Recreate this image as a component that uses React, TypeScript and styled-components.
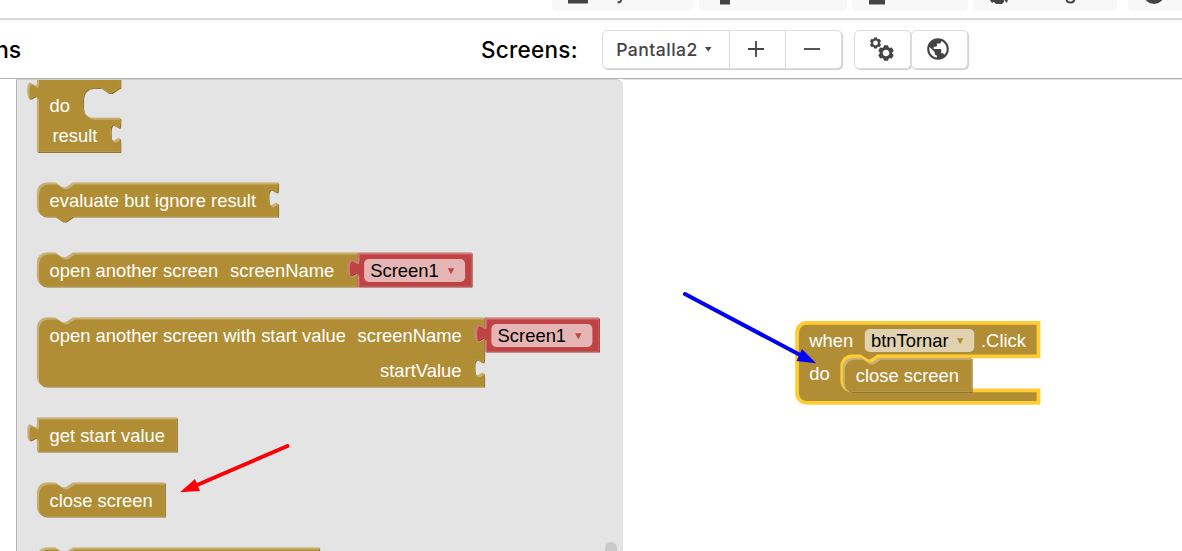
import React, { useId } from 'react';
import styled, { createGlobalStyle } from 'styled-components';
import { MdPublic } from 'react-icons/md';

const Global = createGlobalStyle`
  * { box-sizing: border-box; }
  body { margin: 0; background: #fff; overflow: hidden; }
`;

const Page = styled.div`
  width: 1182px;
  height: 551px;
  overflow: hidden;
  display: flex;
  flex-direction: column;
  font-family: Inter, 'Open Sans', sans-serif;
`;

const MenuStrip = styled.header`
  height: 20px;
  flex: none;
  padding-left: 552px;
  display: flex;
  align-items: flex-start;
  gap: 5px;
  border-bottom: 2px solid #dadada;
  overflow: hidden;
`;

const MenuTab = styled.div<{ $width: number; $shift?: number }>`
  flex: none;
  width: ${(p) => p.$width}px;
  margin-left: ${(p) => p.$shift ?? 0}px;
  height: 11px;
  background: #f8f8f8;
  border-radius: 0 0 5px 5px;
  overflow: hidden;
  svg { display: block; }
`;

const Toolbar = styled.div`
  height: 59px;
  flex: none;
  display: flex;
  align-items: center;
  border-bottom: 1px solid #b4b4b6;
  background: linear-gradient(#f7f7f7, #fff 4px);
`;

const Title = styled.div`
  width: 481px;
  flex: none;
  padding-top: 1px;
  font-size: 23px;
  font-weight: 500;
  display: flex;
  overflow: hidden;
`;

const TitleTail = styled.span`
  margin-left: -5px;
`;

const ScreensLabel = styled.div`
  width: 121px;
  flex: none;
  padding-top: 1px;
  font-size: 22.5px;
  font-weight: 500;
  letter-spacing: 0.25px;
`;

const ButtonGroup = styled.div<{ $gap: number }>`
  height: 39px;
  margin-right: ${(p) => p.$gap}px;
  display: flex;
  border: 1px solid #dcdcdc;
  border-radius: 5px;
  box-shadow: 1px 1px 1px #cfcfcf;
  background: #fff;
`;

const ToolButton = styled.button<{ $width: number }>`
  width: ${(p) => p.$width}px;
  padding: 0 4px 0 0;
  border: 0;
  border-left: 1px solid #d8d8d8;
  background: none;
  color: #444;
  display: flex;
  align-items: center;
  justify-content: center;
  gap: 7px;
  font: 500 17.6px Inter, sans-serif;
  letter-spacing: 0.45px;
  &:first-child { border-left: 0; }
`;

const Workspace = styled.main`
  flex: 1;
  min-height: 0;
  padding-left: 16px;
  display: flex;
`;

const Flyout = styled.aside`
  position: relative;
  width: 607px;
  flex: none;
  border-left: 1px solid #b2b6bb;
  border-top: 1px solid #cfcfd1;
  border-radius: 0 7px 0 0;
  background: #e4e4e4;
  overflow: hidden;
`;

const BlockList = styled.div`
  display: flex;
  flex-direction: column;
  padding-left: 20px;
  margin-top: -5px;
`;

const BlockSlot = styled.div<{ $height: number }>`
  height: ${(p) => p.$height}px;
  flex: none;
`;

const ScrollThumb = styled.div`
  position: absolute;
  left: 588px;
  top: 462px;
  width: 12px;
  height: 40px;
  border-radius: 6px;
  background: #c9c9c9;
`;

const Canvas = styled.section`
  position: relative;
  flex: 1;
  border-top: 1px solid #e2e2e3;
`;

const Placed = styled.div<{ $x: number; $y: number }>`
  position: absolute;
  left: ${(p) => p.$x}px;
  top: ${(p) => p.$y}px;
`;

const Drawing = styled.svg`
  display: block;
  width: 1px;
  height: 1px;
  overflow: visible;
`;

const Label = styled.text<{ $dark?: boolean }>`
  font-family: 'Liberation Sans', Arial, sans-serif;
  font-size: 18.4px;
  fill: ${(p) => (p.$dark ? '#000' : '#fff')};
`;

const Arrows = styled.svg`
  position: absolute;
  left: 0;
  top: 0;
  pointer-events: none;
`;

const GOLD = { main: '#b18e35', light: '#c8b072', dark: '#8e722a', field: '#e0d2ae' };
const RED = { main: '#bf4343', light: '#d27b7b', dark: '#993636', field: '#e5b4b4' };
type Palette = typeof GOLD;

const NOTCH = 'h8.4 l7.2,4.8 h3.6 l7.2,-4.8';
const NOTCH_BACK = 'l-7.2,4.8 h-3.6 l-7.2,-4.8';
const SOCKET = 'c0,12 -9.6,-9.6 -9.6,9 s9.6,-3 9.6,9';
const PLUG = 'V24 c0,-12 -9.6,9.6 -9.6,-9 s9.6,3 9.6,-9 Z';

const command = (w: number, h: number, sockets: number[] = [], tail = false) =>
  `M0,9.6 a9.6,9.6 0 0 1 9.6,-9.6 ${NOTCH} H${w} ` +
  sockets.map((y) => `V${y} ${SOCKET}`).join(' ') +
  ` V${h} ${tail ? `H36 ${NOTCH_BACK} ` : ''}H9.6 a9.6,9.6 0 0 1 -9.6,-9.6 Z`;

const value = (w: number, h: number) => `M0,0 H${w} V${h} H0 ${PLUG}`;

function Shape({ d, tone = GOLD, x = 0, y = 0 }: { d: string; tone?: Palette; x?: number; y?: number }) {
  const id = useId();
  return (
    <g transform={`translate(${x} ${y})`}>
      <clipPath id={id}><path d={d} /></clipPath>
      <path d={d} transform="translate(1.1 1.1)" fill={tone.dark} />
      <path d={d} fill={tone.light} />
      <g clipPath={`url(#${id})`}>
        <path d={d} transform="translate(2 2)" fill={tone.main} />
      </g>
      <path d={d} fill="none" stroke={tone.light} strokeWidth="0.4" strokeOpacity="0.5" />
    </g>
  );
}

function Field({ x, y, w, text, tone }: { x: number; y: number; w: number; text: string; tone: Palette }) {
  return (
    <g transform={`translate(${x} ${y})`}>
      <rect width={w} height="23" rx="4.8" fill={tone.field} />
      <Label $dark x="6.2" y="18">{text}</Label>
      <path d={`M${w - 17.3},9.2 h6.4 l-3.2,6 Z`} fill={tone.main} />
    </g>
  );
}

function ScreenName({ x }: { x: number }) {
  return (
    <g transform={`translate(${x} 0.5)`}>
      <Shape tone={RED} d={value(114, 34)} />
      <Field x={6.6} y={6.5} w={101} text="Screen1" tone={RED} />
    </g>
  );
}

const doResult =
  `M0,0 H83.2 V12.2 H82 ${NOTCH_BACK} H55.6 a9.6,9.6 0 0 0 -9.6,9.6 V32.4 ` +
  `a9.6,9.6 0 0 0 9.6,9.6 H83.2 V48 ${SOCKET} V76 H0 ${PLUG}`;

const whenDo =
  `M0,9.6 a9.6,9.6 0 0 1 9.6,-9.6 H241.4 V33.5 H81 ${NOTCH_BACK} H54.8 ` +
  `a9.6,9.6 0 0 0 -9.6,9.6 V58 a9.6,9.6 0 0 0 9.6,9.6 H241.4 V80 H9.6 a9.6,9.6 0 0 1 -9.6,-9.6 Z`;

function Gear({ cx, cy, r }: { cx: number; cy: number; r: number }) {
  return (
    <g transform={`translate(${cx} ${cy})`}>
      <circle r={r * 0.6} fill="none" stroke="#444" strokeWidth={r * 0.34} />
      {[0, 60, 120, 180, 240, 300].map((a) => (
        <path
          key={a}
          transform={`rotate(${a})`}
          d={`M${-r * 0.4},${-r * 0.62} L${-r * 0.24},${-r} H${r * 0.24} L${r * 0.4},${-r * 0.62} Z`}
          fill="#444"
        />
      ))}
    </g>
  );
}

export default function App() {
  return (
    <Page>
      <Global />
      <MenuStrip>
        <MenuTab $width={142}>
          <svg width="142" height="11">
            <rect x="16" y="-3" width="20" height="6.5" fill="#444" />
            <path d="M69,-4 V0 Q69,2.6 65.5,2.3" fill="none" stroke="#444" strokeWidth="2" />
          </svg>
        </MenuTab>
        <MenuTab $width={148}>
          <svg width="148" height="11"><rect x="21" y="-2" width="10" height="6.5" fill="#444" /></svg>
        </MenuTab>
        <MenuTab $width={116}>
          <svg width="116" height="11"><rect x="17" y="-2" width="16" height="6.5" fill="#444" /></svg>
        </MenuTab>
        <MenuTab $width={144}>
          <svg width="144" height="11">
            <path d="M17,0 l3,-1 l2,2 l-3,2 Z M21,-2 h10 v4 l-2,2 h-6 l-2,-2 Z M31,-1 h4 l-1,4 l-2,-2 Z" fill="#444" />
            <path d="M93.5,0 Q94.5,2.8 98,2.5 Q101.5,2.3 101.5,-2" fill="none" stroke="#444" strokeWidth="2" />
          </svg>
        </MenuTab>
        <MenuTab $width={90} $shift={6}>
          <svg width="90" height="11"><circle cx="26" cy="-6.5" r="10.5" fill="#444" /></svg>
        </MenuTab>
      </MenuStrip>

      <Toolbar>
        <Title><TitleTail>ns</TitleTail></Title>
        <ScreensLabel>Screens:</ScreensLabel>
        <ButtonGroup $gap={12}>
          <ToolButton $width={126}>
            Pantalla2
            <svg width="7" height="5"><path d="M0,0 H6.5 L3.25,4.5 Z" fill="#444" /></svg>
          </ToolButton>
          <ToolButton $width={56}>
            <svg width="16" height="16"><path d="M8,0 V16 M0,8 H16" stroke="#444" strokeWidth="1.8" /></svg>
          </ToolButton>
          <ToolButton $width={56}>
            <svg width="16" height="16"><path d="M0,8 H16" stroke="#444" strokeWidth="1.8" /></svg>
          </ToolButton>
        </ButtonGroup>
        <ButtonGroup $gap={0}>
          <ToolButton $width={55}>
            <svg width="26" height="26">
              <Gear cx={7.5} cy={7} r={5.6} />
              <Gear cx={18} cy={17} r={7.8} />
            </svg>
          </ToolButton>
        </ButtonGroup>
        <ButtonGroup $gap={0}>
          <ToolButton $width={55}><MdPublic size={26} /></ToolButton>
        </ButtonGroup>
      </Toolbar>

      <Workspace>
        <Flyout>
          <BlockList>
            <BlockSlot $height={107}>
              <Drawing>
                <Shape d={doResult} y={0.8} />
                <Label x="12.5" y="37">do</Label>
                <Label x="15.5" y="67">result</Label>
              </Drawing>
            </BlockSlot>
            <BlockSlot $height={70}>
              <Drawing>
                <Shape d={command(241, 34, [6], true)} y={0.5} />
                <Label x="12.5" y="25">evaluate but ignore result</Label>
              </Drawing>
            </BlockSlot>
            <BlockSlot $height={65}>
              <Drawing>
                <Shape d={command(320, 34, [6])} y={0.5} />
                <Label x="12.5" y="25">open another screen</Label>
                <Label x="193" y="25">screenName</Label>
                <ScreenName x={320.5} />
              </Drawing>
            </BlockSlot>
            <BlockSlot $height={100}>
              <Drawing>
                <Shape d={command(447, 69, [6, 41])} y={0.5} />
                <Label x="12.5" y="25">open another screen with start value</Label>
                <Label x="320.5" y="25">screenName</Label>
                <Label x="424.5" y="60" textAnchor="end">startValue</Label>
                <ScreenName x={447.8} />
              </Drawing>
            </BlockSlot>
            <BlockSlot $height={65}>
              <Drawing>
                <Shape d={value(139.8, 34)} y={0.5} />
                <Label x="12.5" y="25">get start value</Label>
              </Drawing>
            </BlockSlot>
            <BlockSlot $height={65}>
              <Drawing>
                <Shape d={command(127.8, 34)} y={0.5} />
                <Label x="12.5" y="25">close screen</Label>
              </Drawing>
            </BlockSlot>
            <BlockSlot $height={35}>
              <Drawing><Shape d={command(282, 34)} y={0.5} /></Drawing>
            </BlockSlot>
          </BlockList>
          <ScrollThumb />
        </Flyout>

        <Canvas>
          <Placed $x={174} $y={242}>
            <Drawing>
              <g transform="translate(0.1 0.8)">
                <path d={whenDo} fill={GOLD.main} stroke="#fc3" strokeWidth="3.8" />
              </g>
              <Label x="12.2" y="25">when</Label>
              <Field x={67.8} y={7} w={109.5} text="btnTornar" tone={GOLD} />
              <Label x="184" y="25">.Click</Label>
              <Label x="12.2" y="58">do</Label>
              <Shape x={46} y={35.8} d={command(128.5, 34)} />
              <Label x="58.8" y="60">close screen</Label>
            </Drawing>
          </Placed>
        </Canvas>
      </Workspace>

      <Arrows width="1182" height="551">
        <path d="M685,294 L802,356" stroke="#0000f4" strokeWidth="4" strokeLinecap="round" />
        <path d="M802,349 L816,363.3 L796.5,361 Z" fill="#0000f4" />
        <path d="M287.5,446 L197,485" stroke="#fb0007" strokeWidth="4" strokeLinecap="round" />
        <path d="M195,479 L180,492.3 L200,491 Z" fill="#fb0007" />
      </Arrows>
    </Page>
  );
}
